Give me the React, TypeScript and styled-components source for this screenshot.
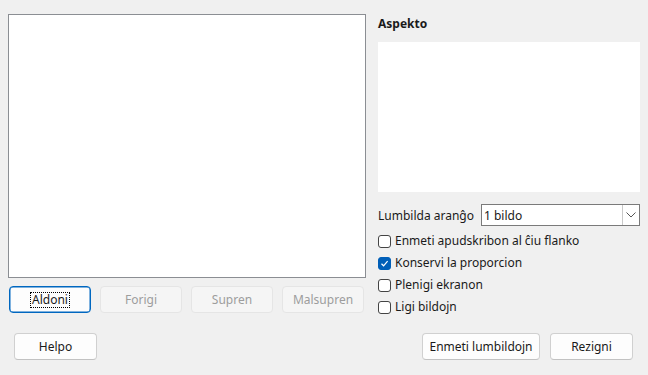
import { useState } from "react"
import styled, { createGlobalStyle } from "styled-components"

const GlobalStyle = createGlobalStyle`
html, body {
  margin: 0;
  padding: 0;
  background: #f0f0f0;
}
body {
  font-family: "Noto Sans", "Open Sans", sans-serif;
  font-size: 12px;
  color: #1a1a1a;
}
`

const options = [
  { key: 'appendText', label: 'Enmeti apudskribon al ĉiu flanko', checked: false },
  { key: 'keepRatio', label: 'Konservi la proporcion', checked: true },
  { key: 'fillScreen', label: 'Plenigi ekranon', checked: false },
  { key: 'linkImages', label: 'Ligi bildojn', checked: false },
]

const App = () => {
  const [checks, setChecks] = useState<Record<string, boolean>>(
    Object.fromEntries(options.map(o => [o.key, o.checked]))
  )

  return (
    <>
      <GlobalStyle />
      <Dialog>
        <Main>
          <LeftCol>
            <ListBox />
            <ListButtons>
              <Button $focused>
                <FocusText>Aldoni</FocusText>
              </Button>
              <Button disabled>Forigi</Button>
              <Button disabled>Supren</Button>
              <Button disabled>Malsupren</Button>
            </ListButtons>
          </LeftCol>
          <RightCol>
            <Title>Aspekto</Title>
            <Preview />
            <LayoutRow>
              <Label>Lumbilda aranĝo</Label>
              <Combo>
                <ComboValue>1 bildo</ComboValue>
                <ComboArrow>
                  <svg width="10" height="6" viewBox="0 0 10 6">
                    <path d="M0.5 0.5 L5 5 L9.5 0.5" fill="none" stroke="#555" strokeWidth="1" />
                  </svg>
                </ComboArrow>
              </Combo>
            </LayoutRow>
            <Checks>
              {options.map(o => (
                <CheckRow key={o.key} onClick={() => setChecks({ ...checks, [o.key]: !checks[o.key] })}>
                  <Box $checked={checks[o.key]}>
                    {checks[o.key] && (
                      <svg width="9" height="9" viewBox="0 0 9 9">
                        <path d="M1.5 4.8 L3.6 6.8 L7.6 2.2" fill="none" stroke="#fff" strokeWidth="1.2" />
                      </svg>
                    )}
                  </Box>
                  <span>{o.label}</span>
                </CheckRow>
              ))}
            </Checks>
          </RightCol>
        </Main>
        <Footer>
          <Button $wide>Helpo</Button>
          <FooterRight>
            <Button $width={118}>Enmeti lumbildojn</Button>
            <Button $wide>Rezigni</Button>
          </FooterRight>
        </Footer>
      </Dialog>
    </>
  )
}

export default App

const Dialog = styled.div`
width: 648px;
height: 375px;
box-sizing: border-box;
display: flex;
flex-direction: column;
background: #f0f0f0;
`

const Main = styled.div`
display: flex;
padding: 14px 0 0 8px;
gap: 12px;
`

const LeftCol = styled.div`
display: flex;
flex-direction: column;
width: 358px;
`

const ListBox = styled.div`
height: 264px;
box-sizing: border-box;
background: #ffffff;
border: 1px solid #8b8e93;
`

const ListButtons = styled.div`
display: flex;
gap: 9px;
margin-top: 8px;
padding-left: 1px;
`

const Button = styled.button<{ $focused?: boolean; $wide?: boolean; $width?: number }>`
width: ${p => (p.$width ? `${p.$width}px` : p.$wide ? '83px' : '82px')};
height: 27px;
box-sizing: border-box;
padding: 0;
font-family: "Noto Sans", "Open Sans", sans-serif;
font-size: 12px;
color: #1a1a1a;
background: #fdfdfd;
border: 1px solid #d0d0d0;
border-bottom-color: #c2c2c2;
border-radius: 4px;
display: flex;
align-items: center;
justify-content: center;

${p => p.$focused && `
  border: 1px solid #0067c0;
  box-shadow: inset 0 0 0 0.5px #0067c0;
`}

&:disabled {
  background: #f5f5f5;
  border-color: #e5e5e5;
  color: #9d9d9d;
}
`

const FocusText = styled.span`
outline: 1px dotted #000;
padding: 0 1px;
line-height: 14px;
`

const RightCol = styled.div`
display: flex;
flex-direction: column;
width: 262px;
`

const Title = styled.div`
font-weight: bold;
height: 28px;
display: flex;
align-items: center;
padding-bottom: 10px;
box-sizing: border-box;
`

const Preview = styled.div`
height: 150px;
background: #ffffff;
`

const LayoutRow = styled.div`
display: flex;
align-items: center;
justify-content: space-between;
margin-top: 12px;
`

const Label = styled.span``

const Combo = styled.div`
width: 159px;
height: 22px;
box-sizing: border-box;
display: flex;
background: #ffffff;
border: 1px solid #7a7a7a;
`

const ComboValue = styled.div`
flex: 1;
padding-left: 2px;
display: flex;
align-items: center;
`

const ComboArrow = styled.div`
width: 16px;
border-left: 1px solid #c9c9c9;
display: flex;
align-items: center;
justify-content: center;
`

const Checks = styled.div`
display: flex;
flex-direction: column;
gap: 6px;
margin-top: 7px;
`

const CheckRow = styled.label`
display: flex;
align-items: center;
gap: 4px;
height: 16px;
line-height: 16px;
cursor: default;
`

const Box = styled.span<{ $checked: boolean }>`
width: 13px;
height: 13px;
box-sizing: border-box;
border-radius: 3px;
display: flex;
align-items: center;
justify-content: center;
background: ${p => (p.$checked ? '#005fb8' : '#ffffff')};
border: 1px solid ${p => (p.$checked ? '#005fb8' : '#444')};
`

const Footer = styled.div`
display: flex;
justify-content: space-between;
margin-top: auto;
padding: 0 15px 15px 14px;
`

const FooterRight = styled.div`
display: flex;
gap: 10px;
`
